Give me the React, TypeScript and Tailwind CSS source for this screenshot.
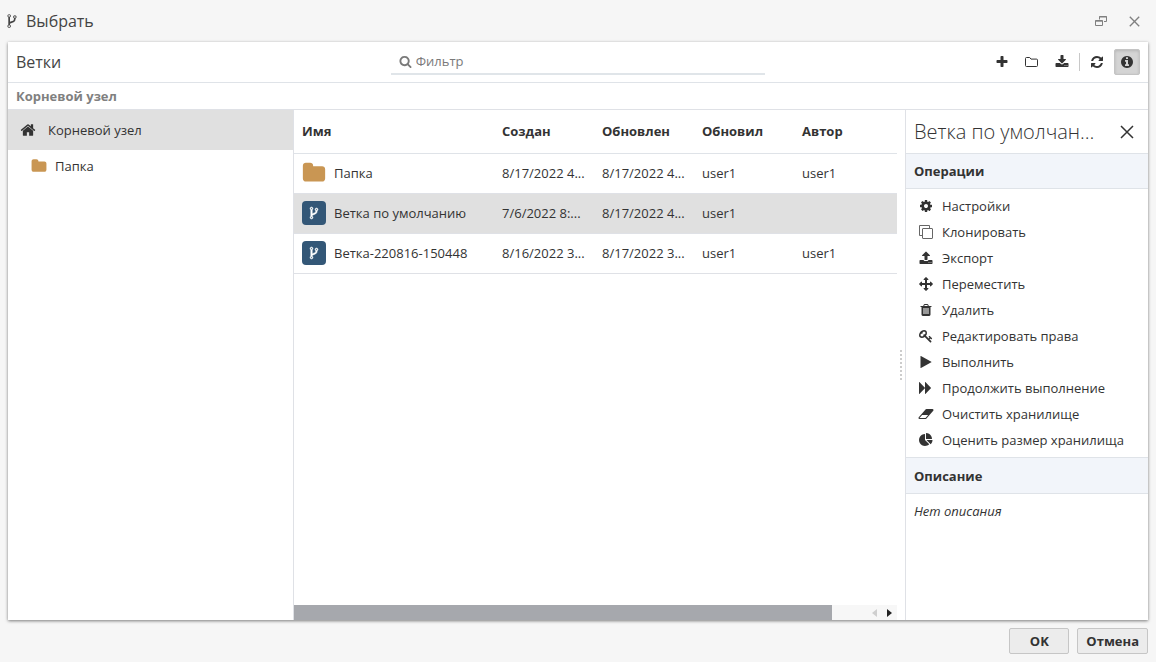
import type { ReactNode } from "react";
import clsx from "clsx";

// Solid glyphs share one 1792-unit grid.
const glyphs = {
  plus: "M1600 736v192q0 40-28 68t-68 28h-416v416q0 40-28 68t-68 28h-192q-40 0-68-28t-28-68v-416h-416q-40 0-68-28t-28-68v-192q0-40 28-68t68-28h416v-416q0-40 28-68t68-28h192q40 0 68 28t28 68v416h416q40 0 68 28t28 68z",
  search: "M1216 832q0-185-131.5-316.5t-316.5-131.5-316.5 131.5-131.5 316.5 131.5 316.5 316.5 131.5 316.5-131.5 131.5-316.5zm512 832q0 52-38 90t-90 38q-54 0-90-38l-343-342q-179 124-399 124-143 0-273.5-55.5t-225-150-150-225-55.5-273.5 55.5-273.5 150-225 225-150 273.5-55.5 273.5 55.5 225 150 150 225 55.5 273.5q0 220-124 399l343 343q37 37 37 90z",
  home: "M1472 992v480q0 26-19 45t-45 19h-384v-384h-256v384h-384q-26 0-45-19t-19-45v-480q0-1 .5-3t.5-3l575-474 575 474q1 2 1 6zm223-69l-62 74q-8 9-21 11h-3q-13 0-21-7l-692-577-692 577q-12 8-24 7-13-2-21-11l-62-74q-8-10-7-23.5t11-21.5l719-599q32-26 76-26t76 26l244 204v-195q0-14 9-23t23-9h192q14 0 23 9t9 23v408l219 182q10 8 11 21.5t-7 23.5z",
  download: "M1344 1344q0-26-19-45t-45-19-45 19-19 45 19 45 45 19 45-19 19-45zm256 0q0-26-19-45t-45-19-45 19-19 45 19 45 45 19 45-19 19-45zm128-224v320q0 40-28 68t-68 28h-1472q-40 0-68-28t-28-68v-320q0-40 28-68t68-28h465l135 136q58 56 136 56t136-56l136-136h464q40 0 68 28t28 68zm-325-569q17 41-14 70l-448 448q-18 19-45 19t-45-19l-448-448q-31-29-14-70 17-39 59-39h256v-448q0-26 19-45t45-19h256q26 0 45 19t19 45v448h256q42 0 59 39z",
  upload: "M1344 1472q0-26-19-45t-45-19-45 19-19 45 19 45 45 19 45-19 19-45zm256 0q0-26-19-45t-45-19-45 19-19 45 19 45 45 19 45-19 19-45zm128-224v320q0 40-28 68t-68 28h-1472q-40 0-68-28t-28-68v-320q0-40 28-68t68-28h427q21 56 70.5 92t110.5 36h256q61 0 110.5-36t70.5-92h427q40 0 68 28t28 68zm-325-648q-17 40-59 40h-256v448q0 26-19 45t-45 19h-256q-26 0-45-19t-19-45v-448h-256q-42 0-59-40-17-39 14-69l448-448q18-19 45-19t45 19l448 448q31 30 14 69z",
  refresh: "M1639 1056q0 5-1 7-64 268-268 434.5t-478 166.5q-146 0-282.5-55t-243.5-157l-129 129q-19 19-45 19t-45-19-19-45v-448q0-26 19-45t45-19h448q26 0 45 19t19 45-19 45l-137 137q71 66 161 102t187 36q134 0 250-65t186-179q11-17 53-117 8-23 30-23h192q13 0 22.5 9.5t9.5 22.5zm25-800v448q0 26-19 45t-45 19h-448q-26 0-45-19t-19-45 19-45l138-138q-148-137-349-137-134 0-250 65t-186 179q-11 17-53 117-8 23-30 23h-199q-13 0-22.5-9.5t-9.5-22.5v-7q65-268 270-434.5t480-166.5q146 0 284 55.5t245 156.5l130-129q19-19 45-19t45 19 19 45z",
  info: "M1152 1376v-160q0-14-9-23t-23-9h-96v-512q0-14-9-23t-23-9h-320q-14 0-23 9t-9 23v160q0 14 9 23t23 9h96v320h-96q-14 0-23 9t-9 23v160q0 14 9 23t23 9h448q14 0 23-9t9-23zm-128-896v-160q0-14-9-23t-23-9h-192q-14 0-23 9t-9 23v160q0 14 9 23t23 9h192q14 0 23-9t9-23zm640 416q0 209-103 385.5t-279.5 279.5-385.5 103-385.5-103-279.5-279.5-103-385.5 103-385.5 279.5-279.5 385.5-103 385.5 103 279.5 279.5 103 385.5z",
  folder: "M1728 608v704q0 92-66 158t-158 66h-1216q-92 0-158-66t-66-158v-960q0-92 66-158t158-66h320q92 0 158 66t66 158v32h672q92 0 158 66t66 158z",
  fork: "M672 1472q0-40-28-68t-68-28-68 28-28 68 28 68 68 28 68-28 28-68zm0-1152q0-40-28-68t-68-28-68 28-28 68 28 68 68 28 68-28 28-68zm640 128q0-40-28-68t-68-28-68 28-28 68 28 68 68 28 68-28 28-68zm96 0q0 52-26 96.5t-70 69.5q-2 287-226 414-67 38-203 81-128 40-169.5 71t-41.5 100v26q44 25 70 69.5t26 96.5q0 80-56 136t-136 56-136-56-56-136q0-52 26-96.5t70-69.5v-820q-44-25-70-69.5t-26-96.5q0-80 56-136t136-56 136 56 56 136q0 52-26 96.5t-70 69.5v497q54-26 154-57 55-17 87.5-29.5t70.5-31 59-39.5 40.5-51 28-69.5 8.5-91.5q-44-25-70-69.5t-26-96.5q0-80 56-136t136-56 136 56 56 136z",
  cog: "M1152 896q0-106-75-181t-181-75-181 75-75 181 75 181 181 75 181-75 75-181zm512-109v222q0 12-8 23t-20 13l-185 28q-19 54-39 91 35 50 107 138 10 12 10 25t-9 23q-27 37-99 108t-94 71q-12 0-26-9l-138-108q-44 23-91 38-16 136-29 186-7 28-36 28h-222q-14 0-24.5-8.5t-11.5-21.5l-28-184q-49-16-90-37l-141 107q-10 9-25 9-14 0-25-11-126-114-165-168-7-10-7-23 0-12 8-23 15-21 51-66.5t54-70.5q-27-50-41-99l-183-27q-13-2-21-12.5t-8-23.5v-222q0-12 8-23t19-13l186-28q14-46 39-92-40-57-107-138-10-12-10-24 0-10 9-23 26-36 98.5-107.5t94.5-71.5q13 0 26 10l138 107q44-23 91-38 16-136 29-186 7-28 36-28h222q14 0 24.5 8.5t11.5 21.5l28 184q49 16 90 37l142-107q9-9 24-9 13 0 25 10 129 119 165 170 7 8 7 22 0 12-8 23-15 21-51 66.5t-54 70.5q26 50 41 98l183 28q13 2 21 12.5t8 23.5z",
  arrows: "M1792 896q0 26-19 45l-256 256q-19 19-45 19t-45-19-19-45v-128h-384v384h128q26 0 45 19t19 45-19 45l-256 256q-19 19-45 19t-45-19l-256-256q-19-19-19-45t19-45 45-19h128v-384h-384v128q0 26-19 45t-45 19-45-19l-256-256q-19-19-19-45t19-45l256-256q19-19 45-19t45 19 19 45v128h384v-384h-128q-26 0-45-19t-19-45 19-45l256-256q19-19 45-19t45 19l256 256q19 19 19 45t-19 45-45 19h-128v384h384v-128q0-26 19-45t45-19 45 19l256 256q19 19 19 45z",
  trash: "M704 1376v-704q0-14-9-23t-23-9h-64q-14 0-23 9t-9 23v704q0 14 9 23t23 9h64q14 0 23-9t9-23zm256 0v-704q0-14-9-23t-23-9h-64q-14 0-23 9t-9 23v704q0 14 9 23t23 9h64q14 0 23-9t9-23zm256 0v-704q0-14-9-23t-23-9h-64q-14 0-23 9t-9 23v704q0 14 9 23t23 9h64q14 0 23-9t9-23zm-544-992h448l-48-117q-7-9-17-11h-317q-10 2-17 11zm928 32v64q0 14-9 23t-23 9h-96v948q0 83-47 143.5t-113 60.5h-832q-66 0-113-58.5t-47-141.5v-952h-96q-14 0-23-9t-9-23v-64q0-14 9-23t23-9h309l70-167q15-37 54-63t79-26h320q40 0 79 26t54 63l70 167h309q14 0 23 9t9 23z",
  key: "M832 512q0-80-56-136t-136-56-136 56-56 136q0 42 19 83-41-19-83-19-80 0-136 56t-56 136 56 136 136 56 136-56 56-136q0-42-19-83 41 19 83 19 80 0 136-56t56-136zm851 704q0 17-49 66t-66 49q-9 0-28.5-16t-36.5-33-38.5-40-24.5-26l-96 96 220 220q28 28 28 68 0 42-39 81t-81 39q-40 0-68-28l-671-671q-176 131-365 131-163 0-265.5-102.5t-102.5-265.5q0-160 95-313t248-248 313-95q163 0 265.5 102.5t102.5 265.5q0 189-131 365l355 355 96-96q-3-3-26-24.5t-40-38.5-33-36.5-16-28.5q0-17 49-66t66-49q13 0 23 10 6 6 46 44.5t82 79.5 86.5 86 73 78 28.5 41z",
  play: "M1576 927l-1328 738q-23 13-39.5 3t-16.5-36v-1472q0-26 16.5-36t39.5 3l1328 738q23 13 23 31t-23 31z",
  forward: "M45 1651q-19 19-32 13t-13-32v-1472q0-26 13-32t32 13l710 710q9 9 13 19v-710q0-26 13-32t32 13l710 710q19 19 19 45t-19 45l-710 710q-19 19-32 13t-13-32v-710q-4 10-13 19z",
  eraser: "M832 1408l336-384h-768l-336 384h768zm1013-1077q15 34 9.5 71.5t-30.5 65.5l-896 1024q-38 44-96 44h-768q-38 0-69.5-20.5t-47.5-54.5q-15-34-9.5-71.5t30.5-65.5l896-1024q38-44 96-44h768q38 0 69.5 20.5t47.5 54.5z",
  pie: "M768 890l546 546q-106 108-247.5 168t-298.5 60q-209 0-385.5-103t-279.5-279.5-103-385.5 103-385.5 279.5-279.5 385.5-103v762zm187 6h773q0 157-60 298.5t-168 247.5zm709-128h-768v-768q209 0 385.5 103t279.5 279.5 103 385.5z",
};

function Glyph({ name, className = "size-[14px]" }: { name: keyof typeof glyphs; className?: string }) {
  return (
    <svg viewBox="0 0 1792 1792" fill="currentColor" aria-hidden="true" className={clsx("shrink-0 overflow-visible", className)}>
      <path d={glyphs[name]} />
    </svg>
  );
}

function Cross({ className }: { className: string }) {
  return (
    <svg viewBox="0 0 14 14" fill="none" stroke="currentColor" aria-hidden="true" className={className}>
      <path d="M1 1l12 12M13 1L1 13" />
    </svg>
  );
}

function RestoreIcon() {
  return (
    <svg viewBox="0 0 12 12" fill="none" stroke="currentColor" aria-hidden="true" className="size-3">
      <path d="M4.5 4.5v-3h7v5H9M4 2h8" />
      <path d="M.5 5.5h7v5h-7zM0 6.2h8" />
    </svg>
  );
}

function FolderOutline() {
  return (
    <svg viewBox="0 0 14 12" fill="none" stroke="currentColor" aria-hidden="true" className="h-3 w-[14px]">
      <path d="M1.5 1.5h3.2l1.3 1.6h5.5a1 1 0 0 1 1 1v5.4a1 1 0 0 1-1 1h-10a1 1 0 0 1-1-1v-7a1 1 0 0 1 1-1z" />
    </svg>
  );
}

function CloneIcon() {
  return (
    <svg viewBox="0 0 14 14" fill="none" stroke="currentColor" aria-hidden="true" className="size-[14px] shrink-0 text-[#666]">
      <path d="M3 10.5H.5V.5h10V3" />
      <rect x="3.5" y="3.5" width="10" height="10" rx=".5" />
    </svg>
  );
}

function ToolButton({ label, active, children }: { label: string; active?: boolean; children: ReactNode }) {
  return (
    <button
      type="button"
      aria-label={label}
      aria-pressed={active}
      className={clsx(
        "flex size-[26px] items-center justify-center rounded-xs",
        active && "border border-[#c4c4c4] bg-[#d4d4d4] shadow-[inset_0_1px_3px_rgba(0,0,0,0.15)]",
      )}
    >
      {children}
    </button>
  );
}

const columns = ["Имя", "Создан", "Обновлен", "Обновил", "Автор"];

const rows = [
  { kind: "folder", name: "Папка", created: "8/17/2022 4...", updated: "8/17/2022 4...", editor: "user1", author: "user1" },
  { kind: "branch", name: "Ветка по умолчанию", created: "7/6/2022 8:...", updated: "8/17/2022 4...", editor: "user1", author: "", selected: true },
  { kind: "branch", name: "Ветка-220816-150448", created: "8/16/2022 3...", updated: "8/17/2022 3...", editor: "user1", author: "user1" },
];

const operations: { icon: ReactNode; label: string }[] = [
  { icon: <Glyph name="cog" />, label: "Настройки" },
  { icon: <CloneIcon />, label: "Клонировать" },
  { icon: <Glyph name="upload" />, label: "Экспорт" },
  { icon: <Glyph name="arrows" />, label: "Переместить" },
  { icon: <Glyph name="trash" />, label: "Удалить" },
  { icon: <Glyph name="key" />, label: "Редактировать права" },
  { icon: <Glyph name="play" />, label: "Выполнить" },
  { icon: <Glyph name="forward" />, label: "Продолжить выполнение" },
  { icon: <Glyph name="eraser" />, label: "Очистить хранилище" },
  { icon: <Glyph name="pie" />, label: "Оценить размер хранилища" },
];

function Toolbar() {
  return (
    <div className="grid h-[41px] shrink-0 grid-cols-3 items-center border-b border-[#dfe3e8] px-2">
      <h2 className="text-base text-[#444]">Ветки</h2>
      <label className="flex h-[26px] items-center gap-1 border-b-2 border-[#e0e5e9] px-2 text-[#7a7a7a]">
        <Glyph name="search" className="size-[13px]" />
        <input
          type="text"
          aria-label="Фильтр"
          placeholder="Фильтр"
          className="min-w-0 flex-1 bg-transparent outline-none placeholder:text-[#7a7a7a]"
        />
      </label>
      <div className="flex items-center justify-end gap-1">
        <ToolButton label="Добавить">
          <Glyph name="plus" />
        </ToolButton>
        <ToolButton label="Создать папку">
          <FolderOutline />
        </ToolButton>
        <ToolButton label="Импорт">
          <Glyph name="download" />
        </ToolButton>
        <span className="h-[18px] w-px bg-[#c8c8c8]" />
        <ToolButton label="Обновить">
          <Glyph name="refresh" />
        </ToolButton>
        <ToolButton label="Информация" active>
          <Glyph name="info" />
        </ToolButton>
      </div>
    </div>
  );
}

function Tree() {
  return (
    <nav className="w-[286px] shrink-0 border-r border-[#dfe1e6]">
      <a href="#root-node" className="flex h-10 items-center gap-3 bg-[#e0e0e0] px-3">
        <Glyph name="home" className="size-4" />
        Корневой узел
      </a>
      <a href="#folder" className="flex h-8 items-center gap-2 pr-3 pl-[23px]">
        <Glyph name="folder" className="size-4 text-[#c99653]" />
        Папка
      </a>
    </nav>
  );
}

function BranchTable() {
  return (
    <div className="flex min-w-0 flex-1 flex-col">
      <table className="w-full table-fixed text-left">
        <thead>
          <tr className="h-[43px] border-b border-[#dfe3e8]">
            {columns.map((title, i) => (
              <th key={title} className={clsx("truncate pl-2 font-bold", i === 0 && "w-[200px]", i > 0 && i < 4 && "w-[100px]")}>
                {title}
              </th>
            ))}
          </tr>
        </thead>
        <tbody>
          {rows.map((row) => (
            <tr key={row.name} className={clsx("h-10 border-b border-[#dfe1e6]", row.selected && "bg-[#e0e0e0]")}>
              <td className="pl-2">
                <span className="flex items-center gap-2">
                  {row.kind === "folder" ? (
                    <Glyph name="folder" className="size-6 text-[#c99653]" />
                  ) : (
                    <span className="flex size-6 items-center justify-center rounded-sm bg-[#335777] text-white">
                      <Glyph name="fork" className="size-[14px] stroke-current stroke-[60]" />
                    </span>
                  )}
                  {row.name}
                </span>
              </td>
              <td className="pl-2 whitespace-nowrap">{row.created}</td>
              <td className="pl-2 whitespace-nowrap">{row.updated}</td>
              <td className="pl-2">{row.editor}</td>
              <td className="pl-2">{row.author}</td>
            </tr>
          ))}
        </tbody>
      </table>
      {/* horizontal scrollbar */}
      <div className="mt-auto flex h-[15px] items-center bg-[#f7f7f7] pr-[5px]">
        <div className="h-full flex-1 bg-[#a6a8ad]" />
        <div className="flex w-[60px] items-center justify-end gap-2">
          <button type="button" aria-label="Прокрутить влево" className="text-[#cfcfcf]">
            <svg viewBox="0 0 6 8" fill="currentColor" className="h-2 w-[6px]">
              <path d="M5 0v8L0 4z" />
            </svg>
          </button>
          <button type="button" aria-label="Прокрутить вправо" className="text-[#222]">
            <svg viewBox="0 0 6 8" fill="currentColor" className="h-2 w-[6px]">
              <path d="M1 0v8l5-4z" />
            </svg>
          </button>
        </div>
      </div>
    </div>
  );
}

function DetailsPanel() {
  return (
    <aside className="flex w-[243px] shrink-0 flex-col border-l border-[#dfe1e6]">
      <div className="flex h-11 shrink-0 items-center justify-between gap-5 border-b border-[#dfe3e8] pr-[14px] pl-2">
        <h3 className="truncate text-xl font-light">Ветка по умолчанию</h3>
        <button type="button" aria-label="Закрыть панель">
          <Cross className="size-[14px] stroke-[1.5]" />
        </button>
      </div>
      <h4 className="flex h-[35px] shrink-0 items-center border-b border-[#dfe3e8] bg-[#f2f5fa] px-2 font-bold">Операции</h4>
      <ul className="py-1">
        {operations.map((op) => (
          <li key={op.label}>
            <button type="button" className="flex h-[26px] w-full items-center gap-[9px] px-[13px] text-left whitespace-nowrap">
              {op.icon}
              {op.label}
            </button>
          </li>
        ))}
      </ul>
      <h4 className="flex h-[37px] shrink-0 items-center border-y border-[#dfe3e8] bg-[#f2f5fa] px-2 font-bold">Описание</h4>
      <p className="px-2 py-[7px] italic">Нет описания</p>
    </aside>
  );
}

export default function App() {
  return (
    <div className="flex min-h-screen flex-col bg-[#f6f6f6] px-2 font-['Open_Sans','Noto_Sans',sans-serif] text-[13px] leading-5 text-[#333]">
      <header className="flex h-[42px] shrink-0 items-center justify-between">
        <h1 className="flex items-center gap-[6px] text-base text-[#444]">
          <Glyph name="fork" className="-ml-1 size-4" />
          Выбрать
        </h1>
        <div className="flex items-center gap-[22px] pr-2 text-[#808080]">
          <button type="button" aria-label="Восстановить">
            <RestoreIcon />
          </button>
          <button type="button" aria-label="Закрыть">
            <Cross className="size-[11px] stroke-[1.7]" />
          </button>
        </div>
      </header>

      <main className="flex flex-1 flex-col bg-white shadow-[0_1px_3px_rgba(0,0,0,0.5)]">
        <Toolbar />
        <div className="flex h-[27px] shrink-0 items-center border-b border-[#dfe1e6] px-2 font-bold text-[#808080]">
          Корневой узел
        </div>
        <div className="flex flex-1">
          <Tree />
          <BranchTable />
          <div className="flex w-2 shrink-0 items-center justify-center">
            <span className="h-[30px] border-l-2 border-dotted border-[#ccc]" />
          </div>
          <DetailsPanel />
        </div>
      </main>

      <footer className="flex h-[42px] shrink-0 items-center justify-end gap-2">
        <button type="button" className="h-[26px] w-[60px] rounded-xs border border-[#c6c6c6] bg-[#ececec] font-bold">
          OK
        </button>
        <button type="button" className="h-[26px] rounded-xs border border-[#c6c6c6] bg-[#ececec] px-2 font-bold">
          Отмена
        </button>
      </footer>
    </div>
  );
}
